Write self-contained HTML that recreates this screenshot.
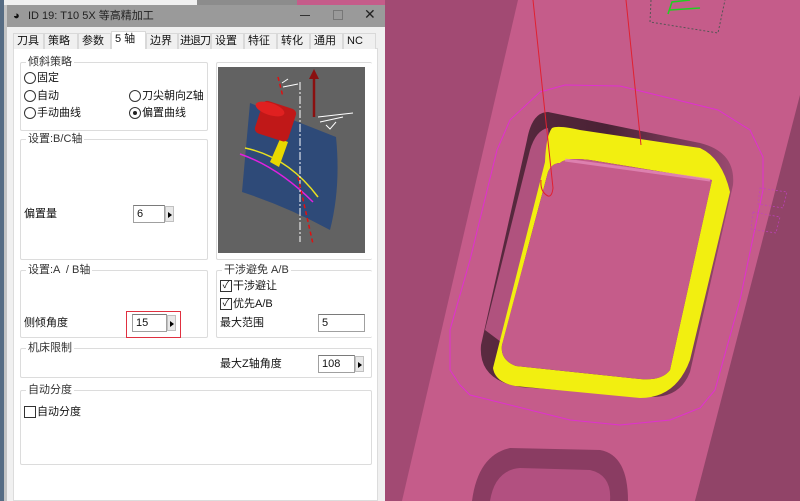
<!DOCTYPE html>
<html><head><meta charset="utf-8"><style>
*{margin:0;padding:0;box-sizing:border-box}
body{width:800px;height:501px;overflow:hidden;position:relative;background:#c55c8a;font-family:"Liberation Sans","Noto Sans CJK SC",sans-serif;font-size:11px;color:#111}
.a{position:absolute}
.grp{position:absolute;border:1px solid #dcdcdc;border-radius:2px}
.gl{position:absolute;top:-8px;left:5px;background:#fff;padding:0 2px;color:#333;font-size:11px;line-height:14px}
.t{position:absolute;line-height:14px;white-space:nowrap}
.rb{position:absolute;width:12px;height:12px;border:1px solid #333;border-radius:50%;background:#fff}
.cb{position:absolute;width:12px;height:12px;border:1px solid #333;background:#fff;font-size:10px;line-height:10px;text-align:center}
.in{position:absolute;border:1px solid #a0a0a0;border-top-color:#7a7a7a;background:#fff;padding-left:3px;line-height:16px;font-size:11px}
.ar{position:absolute;width:9px;background:#e8e8e8;border:1px solid #c0c0c0}
.ar:after{content:"";position:absolute;left:2px;top:5px;border-left:4px solid #000;border-top:3px solid transparent;border-bottom:3px solid transparent}
.tab{position:absolute;top:33px;height:16px;border:1px solid #d9d9d9;border-bottom:none;background:#f0f0f0;line-height:15px;padding-left:3px;font-size:11px;white-space:nowrap;overflow:hidden}
</style></head><body>
<svg class="a" style="left:385px;top:0" width="415" height="501" viewBox="385 0 415 501">
<rect x="385" y="0" width="415" height="501" fill="#a24a73"/>
<polygon points="518,0 830,0 695,501 402,501" fill="#c55c8a"/>
<polygon points="820,60 800,95 695,501 800,501" fill="#914468"/>
<path d="M565,85 L620,86 L718,110 L750,130 L763,157 L763,190 L740,300 L715,390 L700,408 L670,420 L620,425 L570,420 L470,395 L460,385 L450,370 L450,330 L470,260 L497,150 L510,120 L540,92 Z" fill="none" stroke="#e030d0" stroke-width="1"/>
<defs><linearGradient id="cv" x1="0" y1="0" x2="1" y2="0"><stop offset="0" stop-color="#5a2a40"/><stop offset="0.5" stop-color="#4a2235"/><stop offset="1" stop-color="#9a4a70"/></linearGradient></defs>
<path d="M548,112 L700,143 Q736,152 733,185 L690,372 Q680,398 650,397 L520,387 Q478,380 481,345 L527,140 Q532,112 548,112 Z" fill="url(#cv)"/>
<path d="M485,330 L530,150 Q536,130 548,128 L550,150 L505,345 Z" fill="#b0527e"/>
<path fill-rule="evenodd" fill="#f2ef10" d="M552,128 Q558,125 580,130 L700,148 Q722,158 730,192 L690,360 Q676,398 640,398 L515,386 Q495,382 493,368 L545,162 Q546,136 552,128 Z M560,163 Q566,157 590,160 L712,180 L670,370 Q662,381 640,379 L516,366 Q500,360 502,345 L548,172 Q552,163 560,163 Z"/>
<path d="M560,163 Q566,157 590,160 L712,180 L670,370 Q662,381 640,379 L516,366 Q500,360 502,345 L548,172 Q552,163 560,163 Z" fill="#c55c8a"/>
<path d="M565,160 L710,180" stroke="#e890c0" stroke-width="3" opacity=".7"/>
<path d="M533,0 L553,188 Q552,197 548,196 Q540,192 541,180" fill="none" stroke="#e02030" stroke-width="1"/>
<path d="M626,0 L641,145" stroke="#e02030" stroke-width="1"/>
<path d="M651,0 L650,22 L718,33 L725,0" fill="none" stroke="#555" stroke-dasharray="2,2"/>
<path d="M668,14 L672,2 L690,0 M670,10 L700,8" stroke="#20d020" stroke-width="1.5" fill="none"/>
<path d="M760,188 L787,192 L783,208 L758,204 Z M753,212 L780,217 L776,233 L751,229 Z" fill="none" stroke="#c040c0" stroke-dasharray="2,2" stroke-width=".7"/>
<path d="M472,501 Q478,455 510,448 L600,450 Q628,455 628,501 Z" fill="#8a3c62"/>
<path d="M490,501 Q495,470 520,468 L590,470 Q612,475 610,501 Z" fill="#b25080"/>
</svg>
<div class="a" style="left:0;top:0;width:197px;height:5px;background:#f0f0f0"></div>
<div class="a" style="left:197px;top:0;width:100px;height:5px;background:#8c8c8c"></div>
<div class="a" style="left:0;top:0;width:4px;height:501px;background:#566c84"></div>
<div class="a" style="left:4px;top:5px;width:3px;height:496px;background:#c4c4c4"></div>
<div class="a" style="left:7px;top:5px;width:378px;height:496px;background:#f0f0f0"></div>
<div class="a" style="left:7px;top:5px;width:378px;height:22px;background:#9a9a9a"></div>
<div class="t" style="left:13px;top:9px;font-size:11px">◕</div>
<div class="t" style="left:28px;top:9px;color:#222">ID 19: T10 5X 等高精加工</div>
<div class="a" style="left:300px;top:15px;width:10px;height:1px;background:#333"></div>
<div class="a" style="left:333px;top:10px;width:10px;height:10px;border:1px solid #777"></div>
<div class="t" style="left:364px;top:7px;font-size:14px;color:#222">✕</div>
<div class="a" style="left:13px;top:48px;width:365px;height:453px;background:#fff;border:1px solid #dcdcdc"></div>
<div class="tab" style="left:13px;width:31px">刀具</div>
<div class="tab" style="left:44px;width:34px">策略</div>
<div class="tab" style="left:78px;width:33px">参数</div>
<div class="tab" style="left:111px;top:31px;height:18px;width:35px;background:#fff">5 轴</div>
<div class="tab" style="left:146px;width:32px">边界</div>
<div class="tab" style="left:178px;width:33px;padding-left:1px;letter-spacing:-1px">进退刀</div>
<div class="tab" style="left:211px;width:33px">设置</div>
<div class="tab" style="left:244px;width:33px">特征</div>
<div class="tab" style="left:277px;width:33px">转化</div>
<div class="tab" style="left:310px;width:33px">通用</div>
<div class="tab" style="left:343px;width:33px">NC</div>

<div class="grp" style="left:20px;top:62px;width:188px;height:69px"><span class="gl">倾斜策略</span></div>
<div class="rb" style="left:24px;top:72px"></div><div class="t" style="left:37px;top:71px">固定</div>
<div class="rb" style="left:24px;top:90px"></div><div class="t" style="left:37px;top:89px">自动</div>
<div class="rb" style="left:24px;top:107px"></div><div class="t" style="left:37px;top:106px">手动曲线</div>
<div class="rb" style="left:129px;top:90px"></div><div class="t" style="left:142px;top:89px">刀尖朝向Z轴</div>
<div class="rb" style="left:129px;top:107px"><div class="a" style="left:3px;top:3px;width:4px;height:4px;border-radius:50%;background:#222"></div></div><div class="t" style="left:142px;top:106px">偏置曲线</div>

<div class="grp" style="left:216px;top:62px;width:156px;height:198px;border-right:none"></div>
<svg class="a" style="left:218px;top:67px" width="147" height="186" viewBox="0 0 147 186">
<rect width="147" height="186" fill="#626262"/>
<path d="M32,36 L118,70 Q123,120 112,163 Q70,140 24,125 Q28,80 32,36 Z" fill="#2e4a78"/>
<path d="M27,81 Q70,90 100,130" stroke="#e8e020" stroke-width="1.5" fill="none"/>
<path d="M22,87 Q60,100 95,135" stroke="#e020e0" stroke-width="1.5" fill="none"/>
<path d="M82,15 L82,175" stroke="#fff" stroke-dasharray="8,2,2,2" stroke-width="1"/>
<path d="M60,10 L65,30 M80,110 L95,177" stroke="#e01010" stroke-dasharray="4,3" stroke-width="1.5"/>
<path d="M65,20 L80,17 M64,16 L70,12" stroke="#fff" stroke-width="1" fill="none"/>
<path d="M96,50 L96,8" stroke="#8a1010" stroke-width="2.5"/>
<path d="M91,12 L96,2 L101,12 Z" fill="#8a1010"/>
<path d="M100,50 L135,46 M102,55 L125,50 M108,58 L112,62 L118,55" stroke="#fff" stroke-width="1" fill="none"/>
<path d="M52,95 L62,72 L70,75 L61,100 Z" fill="#e8d800"/>
<rect x="40" y="37" width="35" height="34" rx="5" fill="#c01818" transform="rotate(18 57 54)"/>
<ellipse cx="52" cy="42" rx="15" ry="6" fill="#e02020" transform="rotate(18 52 42)"/>
</svg>

<div class="grp" style="left:20px;top:139px;width:188px;height:121px"><span class="gl">设置:B/C轴</span></div>
<div class="t" style="left:24px;top:207px">偏置量</div>
<div class="in" style="left:133px;top:205px;width:32px;height:18px">6</div>
<div class="ar" style="left:165px;top:206px;height:16px"></div>

<div class="grp" style="left:20px;top:270px;width:188px;height:68px"><span class="gl">设置:A &nbsp;/ B轴</span></div>
<div class="t" style="left:24px;top:316px">侧倾角度</div>
<div class="a" style="left:126px;top:311px;width:55px;height:27px;border:1px solid #e03040"></div>
<div class="in" style="left:132px;top:314px;width:35px;height:18px">15</div>
<div class="ar" style="left:167px;top:315px;height:16px"></div>

<div class="grp" style="left:216px;top:270px;width:156px;height:68px;border-right:none"><span class="gl">干涉避免 A/B</span></div>
<div class="cb" style="left:220px;top:280px">✓</div><div class="t" style="left:233px;top:279px">干涉避让</div>
<div class="cb" style="left:220px;top:298px">✓</div><div class="t" style="left:233px;top:297px">优先A/B</div>
<div class="t" style="left:220px;top:316px">最大范围</div>
<div class="in" style="left:318px;top:314px;width:47px;height:18px">5</div>

<div class="grp" style="left:20px;top:348px;width:352px;height:30px"><span class="gl">机床限制</span></div>
<div class="t" style="left:220px;top:357px">最大Z轴角度</div>
<div class="in" style="left:318px;top:355px;width:37px;height:18px">108</div>
<div class="ar" style="left:355px;top:356px;height:16px"></div>

<div class="grp" style="left:20px;top:390px;width:352px;height:75px"><span class="gl">自动分度</span></div>
<div class="cb" style="left:24px;top:406px"></div><div class="t" style="left:37px;top:405px">自动分度</div>
</body></html>
